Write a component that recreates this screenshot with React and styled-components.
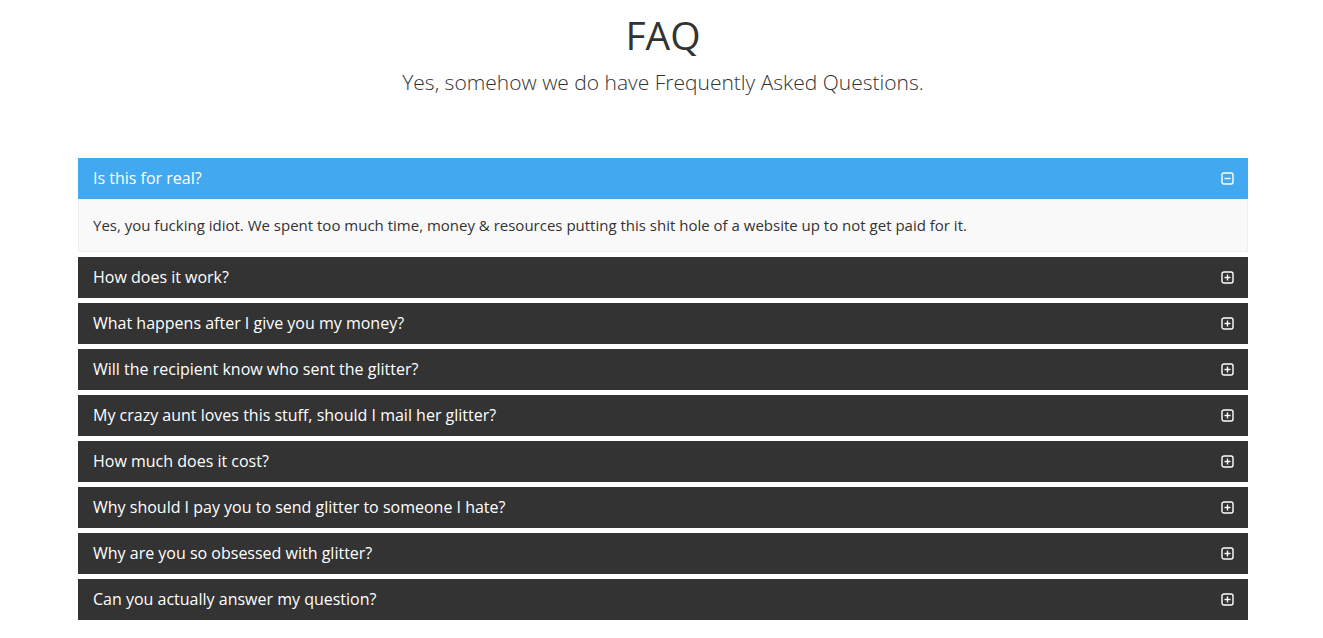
import { useState } from "react";
import styled, { createGlobalStyle } from "styled-components";

const GlobalStyle = createGlobalStyle`
  body {
    margin: 0;
    background: #fff;
    font-family: "Open Sans", "Liberation Sans", sans-serif;
    color: #333;
  }
`;

const faqs = [
  {
    q: "Is this for real?",
    a: "Yes, you fucking idiot. We spent too much time, money & resources putting this shit hole of a website up to not get paid for it.",
  },
  { q: "How does it work?", a: "" },
  { q: "What happens after I give you my money?", a: "" },
  { q: "Will the recipient know who sent the glitter?", a: "" },
  { q: "My crazy aunt loves this stuff, should I mail her glitter?", a: "" },
  { q: "How much does it cost?", a: "" },
  { q: "Why should I pay you to send glitter to someone I hate?", a: "" },
  { q: "Why are you so obsessed with glitter?", a: "" },
  { q: "Can you actually answer my question?", a: "" },
];

const ToggleIcon = ({ open }) => (
  <svg width="13" height="13" viewBox="0 0 13 13" fill="none">
    <rect x="1" y="1" width="11" height="11" rx="2" stroke="#fff" strokeWidth="1.4" />
    <line x1="3.5" y1="6.5" x2="9.5" y2="6.5" stroke="#fff" strokeWidth="1.4" />
    {!open && <line x1="6.5" y1="3.5" x2="6.5" y2="9.5" stroke="#fff" strokeWidth="1.4" />}
  </svg>
);

const App = () => {
  const [openIndex, setOpenIndex] = useState(0);

  return (
    <Page>
      <GlobalStyle />
      <Header>
        <h1>FAQ</h1>
        <p>Yes, somehow we do have Frequently Asked Questions.</p>
      </Header>
      <PanelGroup>
        {faqs.map((item, i) => (
          <Panel key={item.q}>
            <PanelHeading
              $active={openIndex === i}
              onClick={() => setOpenIndex(openIndex === i ? -1 : i)}
            >
              <span>{item.q}</span>
              <ToggleIcon open={openIndex === i} />
            </PanelHeading>
            {openIndex === i && <PanelBody>{item.a}</PanelBody>}
          </Panel>
        ))}
      </PanelGroup>
    </Page>
  );
};
export default App;

const Page = styled.div`
  padding-left: 3px;
`;

const Header = styled.div`
  text-align: center;
  padding-top: 13px;
  margin-bottom: 63px;

  h1 {
    margin: 0;
    font-size: 39px;
    font-weight: 400;
    line-height: 44px;
    color: #333;
  }
  p {
    margin: 13px 0 0;
    font-size: 21px;
    font-weight: 300;
    line-height: 25px;
    color: #333;
  }
`;

const PanelGroup = styled.div`
  width: 1170px;
  margin: 0 auto;
  display: flex;
  flex-direction: column;
  gap: 5px;
`;

const Panel = styled.div`
  display: flex;
  flex-direction: column;
`;

const PanelHeading = styled.div`
  display: flex;
  align-items: center;
  justify-content: space-between;
  height: 41px;
  box-sizing: border-box;
  padding: 0 14px 2px 15px;
  background: ${(p) => (p.$active ? "#42a9f0" : "#333333")};
  color: #fff;
  font-size: 16px;
  cursor: pointer;

  svg {
    margin-top: 2px;
  }
`;

const PanelBody = styled.div`
  background: #f9f9f9;
  border: 1px solid #eee;
  border-top: none;
  padding: 16px 14px 16px 14px;
  font-size: 15px;
  line-height: 20px;
  color: #333;
`;
